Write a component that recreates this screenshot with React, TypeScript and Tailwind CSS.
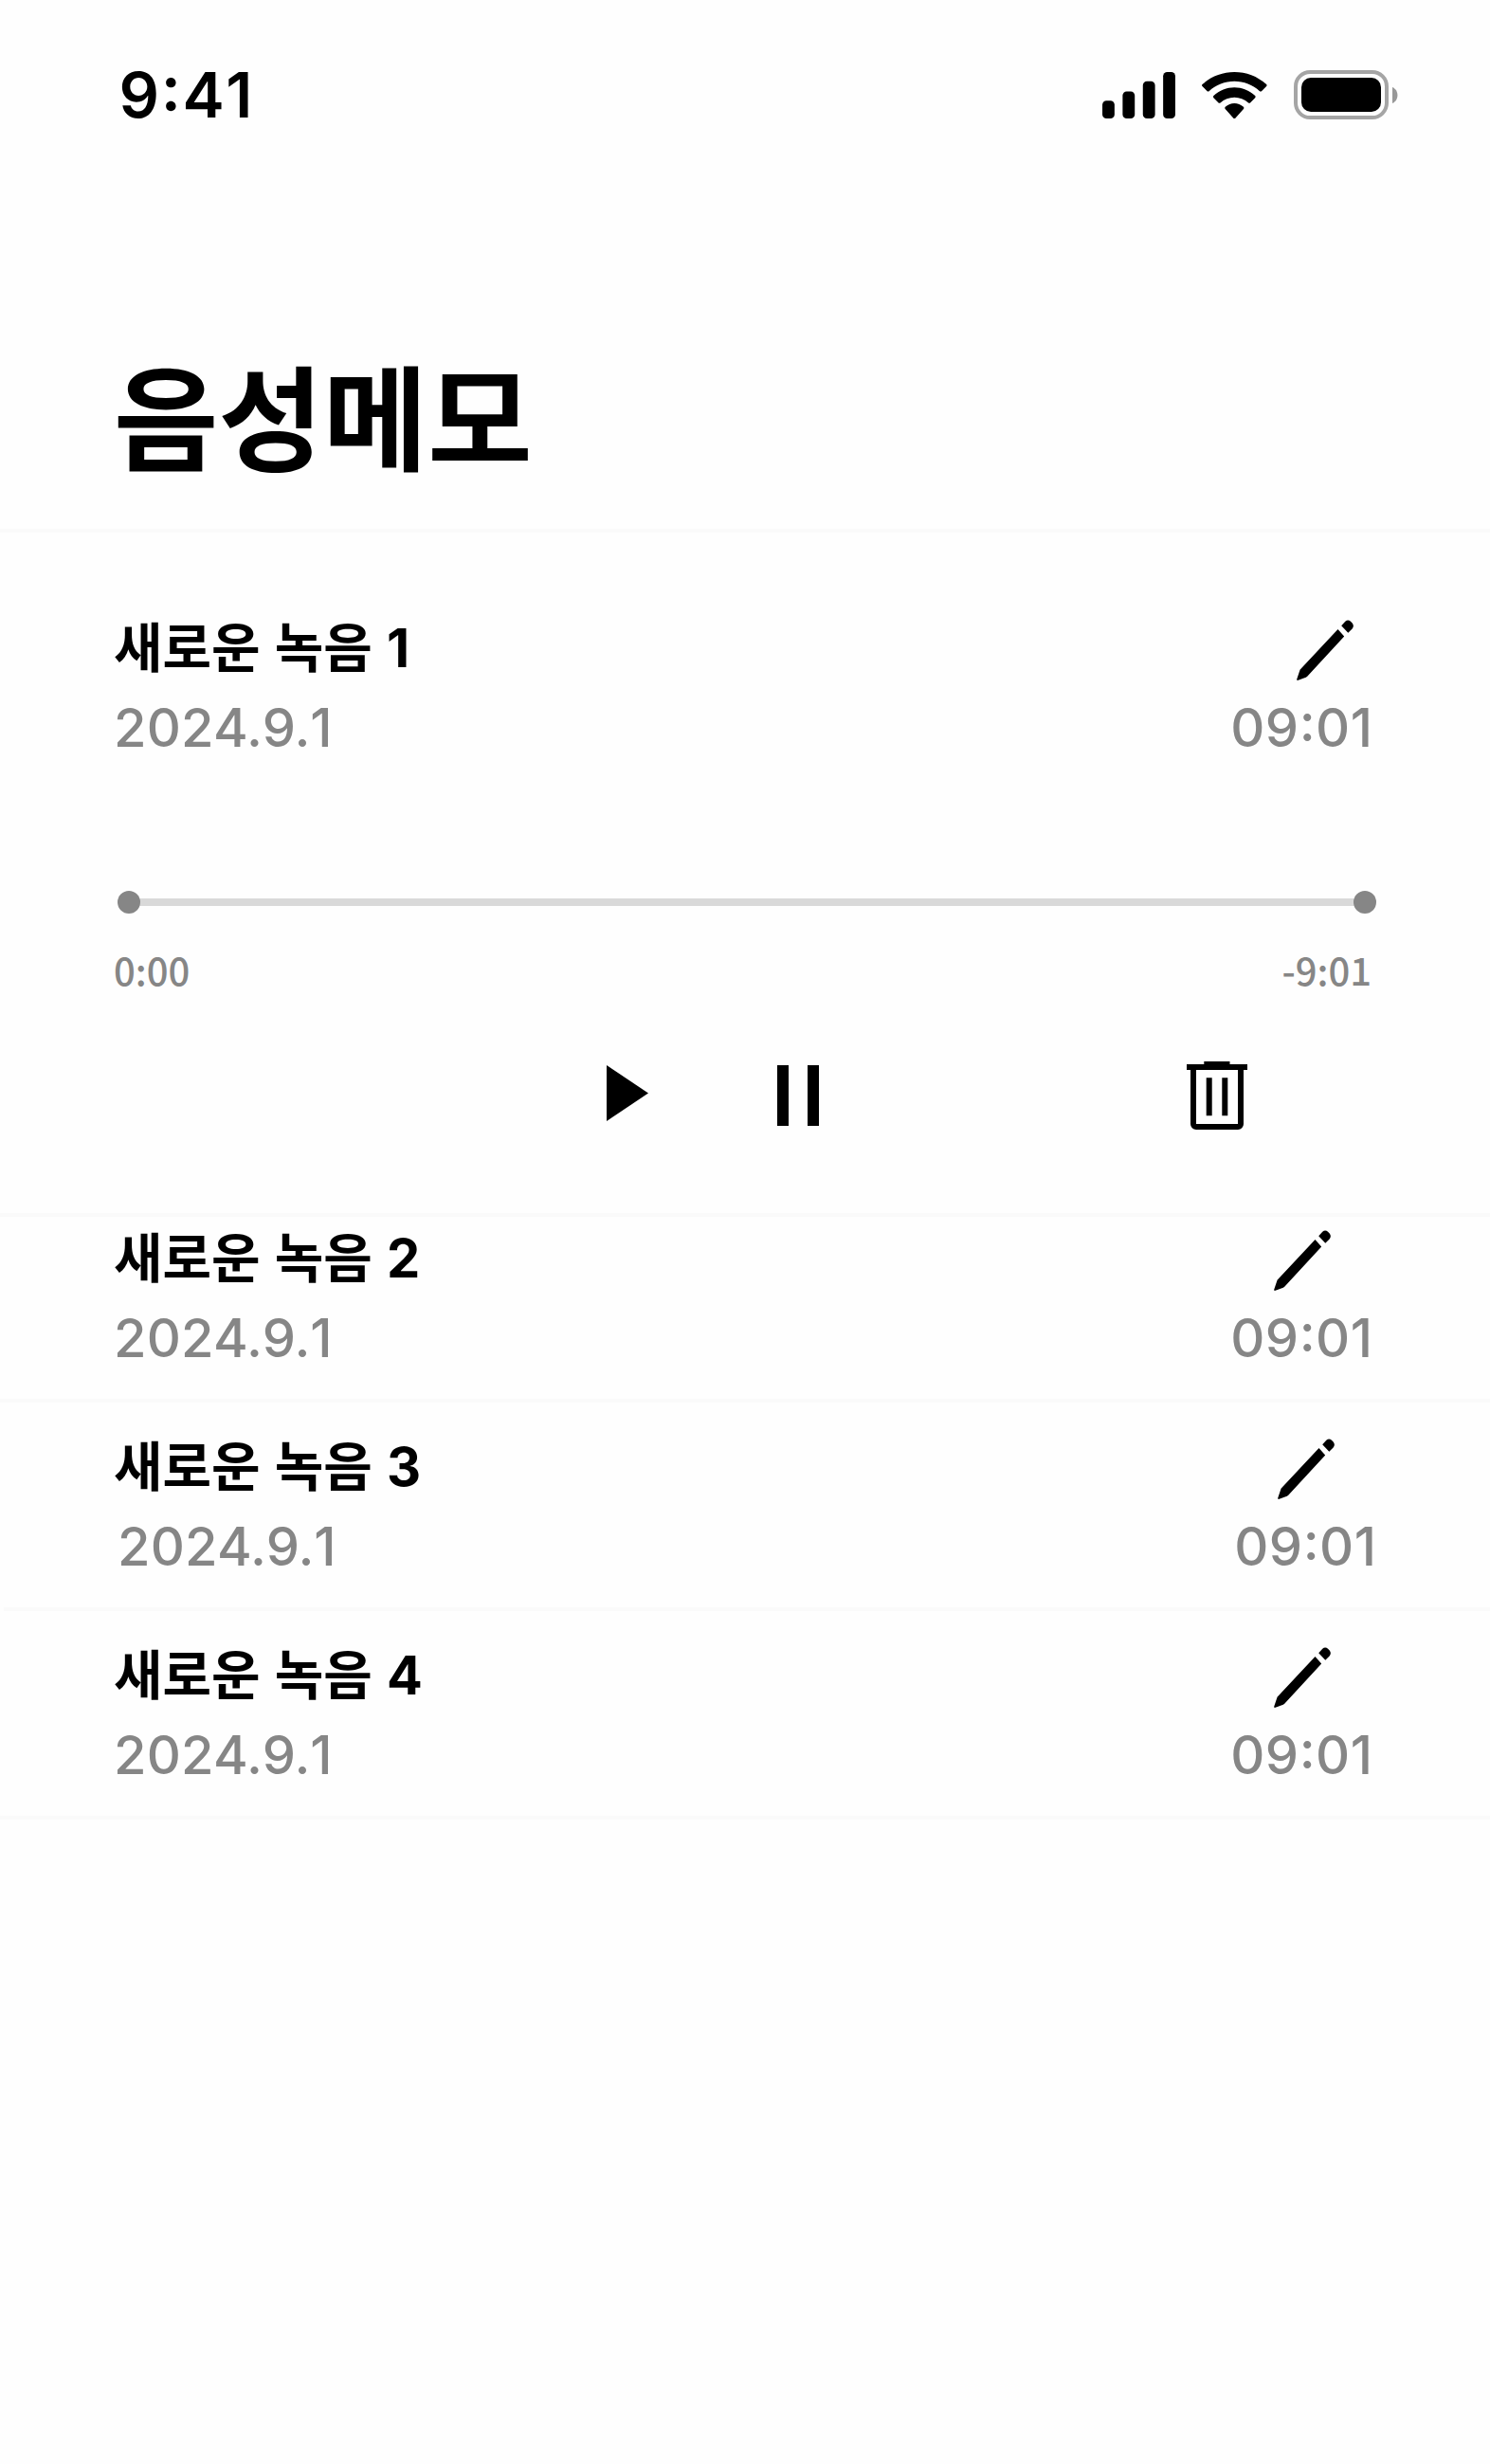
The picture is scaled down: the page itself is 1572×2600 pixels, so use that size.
const inter = "font-['Inter','Noto_Sans_CJK_KR',sans-serif] [font-optical-sizing:none] [font-feature-settings:'calt']";
const noto = "font-['Noto_Sans_CJK_KR',sans-serif]";

type Memo = { title: string; date: string; length: string };

function StatusBar() {
  return (
    <header className="flex h-[126px] items-end justify-between pl-[125.5px] pr-[97px]">
      <div className={`${inter} -mb-[7px] text-[66.5px] font-semibold leading-[66px] tracking-[1.6px] [font-kerning:none]`}>9:41</div>
      <div className="flex items-end">
        <svg className="mb-[1px] mr-[28px] h-[49px] w-[77px]" viewBox="0 0 19.2 12.23">
          <rect x="0" y="7.54" width="3.2" height="4.69" rx="1.07" />
          <rect x="5.33" y="5.1" width="3.2" height="7.13" rx="1.07" />
          <rect x="10.67" y="2.45" width="3.2" height="9.78" rx="1.07" />
          <rect x="16" y="0" width="3.2" height="12.23" rx="1.07" />
        </svg>
        <svg className="mb-[1px] mr-[28px] h-[49.3px] w-[68.6px]" viewBox="0 0 17.14 12.33">
          <path d="M8.5713 2.46628C11.0584 2.46639 13.4504 3.38847 15.2529 5.04195C15.3887 5.16963 15.6056 5.16802 15.7393 5.03834L17.0368 3.77487C17.1045 3.70911 17.1422 3.62004 17.1417 3.52735C17.1411 3.43467 17.1023 3.34603 17.0338 3.28104C12.3028 -1.09368 4.83907 -1.09368 0.108056 3.28104C0.0395 3.34598 0.0006 3.4346 0 3.52728C-0.0006 3.61996 0.037 3.70906 0.1047 3.77487L1.40255 5.03834C1.53615 5.16822 1.75327 5.16983 1.88893 5.04195C3.69167 3.38836 6.08395 2.46628 8.5713 2.46628Z" />
          <path d="M8.56795 6.68656C9.93466 6.68647 11.2526 7.19821 12.2657 8.1224C12.4027 8.25374 12.6189 8.25089 12.7525 8.11598L14.0484 6.79261C14.1166 6.72269 14.1544 6.62816 14.1534 6.53C14.1523 6.43183 14.1125 6.33816 14.0429 6.26972C10.9579 3.34868 6.17786 3.34868 3.09288 6.26972C3.02325 6.33816 2.98343 6.43188 2.98246 6.53006C2.98148 6.62824 3.01942 6.72274 3.08771 6.79261L4.38324 8.11598C4.51682 8.25089 4.73306 8.25374 4.87 8.1224C5.88239 7.19884 7.19938 6.68715 8.56795 6.68656Z" />
          <path d="M11.0924 9.48C11.0943 9.585 11.0572 9.687 10.9899 9.761L8.82 12.216C8.758 12.288 8.6715 12.3287 8.581 12.3287C8.4906 12.3287 8.404 12.288 8.34 12.216L6.16885 9.761C6.1015 9.687 6.0645 9.585 6.0665 9.48C6.0685 9.375 6.1094 9.275 6.1794 9.204C7.55 7.9 9.61 7.9 10.98 9.204C11.05 9.275 11.09 9.375 11.0924 9.48Z" />
        </svg>
        <svg className="h-[52px] w-[110px]" viewBox="0 0 110 52">
          <rect x="2" y="2" width="96" height="48" rx="15.2" fill="none" stroke="#000" strokeWidth="4" opacity=".35" />
          <rect x="8" y="8" width="84" height="36" rx="10" />
          <path d="M104 18V35C107.4 33.6 109.4 30.3 109.4 26.5C109.4 22.7 107.4 19.4 104 18Z" opacity=".4" />
        </svg>
      </div>
    </header>
  );
}

function Pencil() {
  return (
    <svg className="h-16 w-[60px]" viewBox="0 0 60 64">
      <path d="M43.5 10L50.2 17.4L11.2 59.8C10.8 60.3 10.3 60.5 9.8 60.7L1.6 63.8C0.6 64.2 0 63.6 0.2 62.7L3.3 53.4C3.5 52.8 3.8 52.4 4.2 52Z" />
      <path d="M47.2 6.3L51.3 1.8C53 -0.1 55.3 0 57 1.7L58.2 3C60.2 5 60.4 7.4 58.6 9.4L54.3 13.8Z" />
    </svg>
  );
}

function Divider({ className = "" }: { className?: string }) {
  return <div className={`h-1 bg-[#fafafa] ${className}`} />;
}

function MemoInfo({ memo, className = "", dateClass = "", pencilClass }: { memo: Memo; className?: string; dateClass?: string; pencilClass: string }) {
  return (
    <div className={`${inter} flex justify-between pl-[120px] text-[56px] leading-[84px] ${className}`}>
      <div>
        <h2 className="font-bold [word-spacing:2px]">{memo.title}</h2>
        <p className={`font-medium tracking-[0.2px] text-[#868686] ${dateClass}`}>
          {memo.date.slice(0, -1)}
          <span className="-ml-[0.5px] [font-kerning:none]">{memo.date.slice(-1)}</span>
        </p>
      </div>
      <div className="flex flex-col items-end">
        <div className={`flex h-[84px] items-start pt-3 ${pencilClass}`}>
          <Pencil />
        </div>
        <p className="pr-[3.5px] font-medium tracking-[0.5px] text-[#868686]">{memo.length}</p>
      </div>
    </div>
  );
}

function Player() {
  return (
    <div className="pt-[130px]">
      <div className="ml-[124px] flex w-[1328px] items-center">
        <span className="z-10 size-6 rounded-full bg-[#868686]" />
        <span className="-mx-1 h-2 flex-1 bg-[#d9d9d9]" />
        <span className="z-10 size-6 rounded-full bg-[#868686]" />
      </div>
      <div className={`${noto} flex h-[120px] justify-between pl-[120px] pr-[125px] pt-[30px] text-[40px] font-medium leading-[58px] text-[#868686]`}>
        <span>0:00</span>
        <span>-9:01</span>
      </div>
      <div className="flex h-[196px] items-start pl-[640px] pt-[36px]">
        <svg className="mt-1 h-[59px] w-11" viewBox="0 0 44 59">
          <path d="M0 0L44 29.5L0 59Z" />
        </svg>
        <div className="ml-[136px] mt-1 flex gap-5">
          <span className="h-16 w-3 bg-black" />
          <span className="h-16 w-3 bg-black" />
        </div>
        <svg className="ml-[388px] h-[72px] w-16" viewBox="0 0 64 72">
          <path d="M18.3 0H45.5V3H64V9H0V3H18.3Z" />
          <path d="M7 6V66C7 67.7 8.3 69 10 69H54C55.7 69 57 67.7 57 66V6M23.7 17.3V57.3M40.3 17.3V57.3" fill="none" stroke="#000" strokeWidth="6" />
        </svg>
      </div>
    </div>
  );
}

export default function App() {
  const memo = (n: number): Memo => ({ title: `새로운 녹음 ${n}`, date: "2024.9.1", length: "09:01" });
  return (
    <div className="h-[2600px] w-[1572px] overflow-hidden bg-[#fefefe] text-black">
      <StatusBar />
      <h1 className={`${noto} h-[432px] pl-[120px] pt-[223px] text-[120px] font-bold leading-[174px]`}>음성메모</h1>
      <Divider />
      <section className="h-[718px] pt-20">
        <MemoInfo memo={memo(1)} className="pr-[120px]" pencilClass="mr-[24px]" />
        <Player />
      </section>
      <Divider />
      <MemoInfo memo={memo(2)} className="h-[192px] pr-[120px] pt-[2px]" pencilClass="mr-[48px]" />
      <Divider />
      <MemoInfo memo={memo(3)} className="h-[216px] pr-[116px] pt-[26px]" dateClass="pl-1" pencilClass="mr-[48px]" />
      <Divider className="ml-1" />
      <MemoInfo memo={memo(4)} className="h-[216px] pr-[120px] pt-[26px]" pencilClass="mr-[48px]" />
      <Divider />
    </div>
  );
}
